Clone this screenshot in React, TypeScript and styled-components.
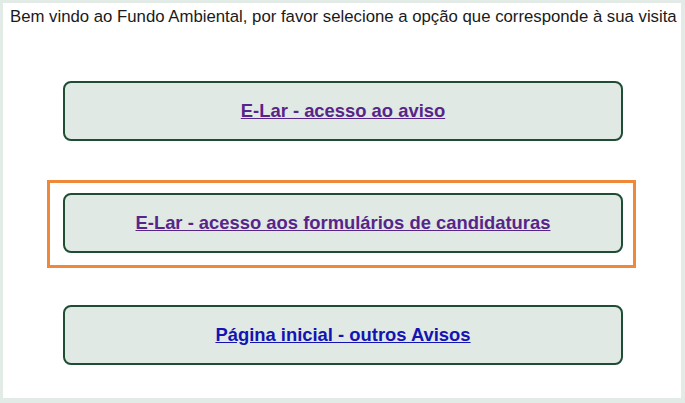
import React from "react";
import styled, { createGlobalStyle } from "styled-components";

const Global = createGlobalStyle`
  html, body { margin: 0; padding: 0; background: #e2ebe6; }
  body { font-family: "Liberation Sans", Arial, sans-serif; }
`;

const Frame = styled.div`
  padding: 3px 4px 5px 3px;
`;

const Panel = styled.main`
  background: #ffffff;
  height: 395px;
  box-sizing: border-box;
  padding: 4px 0 0 7px;
  display: flex;
  flex-direction: column;
`;

const Intro = styled.p`
  margin: 0;
  font-size: 16.75px;
  color: #1a1a1a;
  white-space: nowrap;
`;

const Options = styled.nav`
  display: flex;
  flex-direction: column;
  align-items: center;
  gap: 24px;
  margin-top: 41px;
  padding-right: 8px;
`;

const FocusBox = styled.div<{ $focused?: boolean }>`
  border: 3px solid ${(p) => (p.$focused ? "#f0883a" : "transparent")};
  padding: 10px 10px 12px 13px;
`;

const OptionButton = styled.a<{ $visited?: boolean }>`
  display: flex;
  align-items: center;
  justify-content: center;
  width: 560px;
  height: 60px;
  box-sizing: border-box;
  border: 2px solid #1e4d34;
  border-radius: 8px;
  background: #e1e9e4;
  font-size: 18.4px;
  font-weight: bold;
  color: ${(p) => (p.$visited ? "#57258a" : "#1414b4")};
  text-decoration: underline;
  cursor: pointer;
`;

const options = [
  { label: "E-Lar - acesso ao aviso", visited: true, focused: false },
  { label: "E-Lar - acesso aos formulários de candidaturas", visited: true, focused: true },
  { label: "Página inicial - outros Avisos", visited: false, focused: false },
];

export default function App() {
  return (
    <>
      <Global />
      <Frame>
        <Panel>
          <Intro>
            Bem vindo ao Fundo Ambiental, por favor selecione a opção que corresponde à sua visita
          </Intro>
          <Options>
            {options.map((o) => (
              <FocusBox key={o.label} $focused={o.focused}>
                <OptionButton $visited={o.visited}>{o.label}</OptionButton>
              </FocusBox>
            ))}
          </Options>
        </Panel>
      </Frame>
    </>
  );
}
